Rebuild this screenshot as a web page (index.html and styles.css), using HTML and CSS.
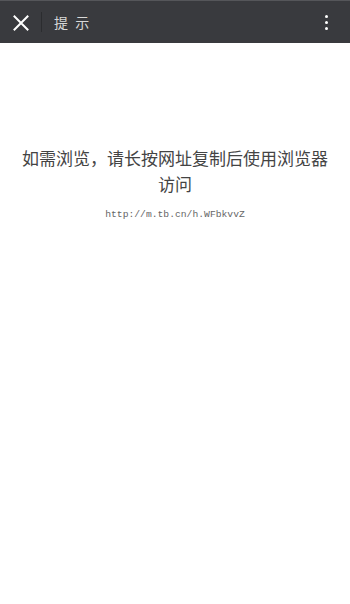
FILE: index.html
```html
<!DOCTYPE html>
<html lang="zh">
<head>
<meta charset="utf-8">
<title>提示</title>
<link rel="stylesheet" href="styles.css">
</head>
<body>
<header class="bar">
  <div class="close">
    <svg width="16" height="16" viewBox="0 0 16 16"><path d="M1.5 1.5 L14.5 14.5 M14.5 1.5 L1.5 14.5" stroke="#fff" stroke-width="2" stroke-linecap="square"/></svg>
  </div>
  <div class="divider"></div>
  <div class="title">提 示</div>
  <div class="menu"><span></span><span></span><span></span></div>
</header>
<main class="content">
  <p class="msg">如需浏览，请长按网址复制后使用浏览器<br>访问</p>
  <p class="url">http://m.tb.cn/h.WFbkvvZ</p>
</main>
</body>
</html>
```
FILE: styles.css
```css
html, body { margin: 0; padding: 0; background: #fff; }
body { width: 350px; height: 604px; font-family: "Noto Sans CJK SC", "Noto Sans", sans-serif; }
.bar {
  height: 43px;
  background: #393a3e;
  border-top: 1px solid #55565a;
  box-sizing: border-box;
  display: flex;
  align-items: center;
}
.close { width: 41px; display: flex; justify-content: center; align-items: center; padding-top: 1px; }
.divider { width: 1px; height: 20px; background: #2b2c2f; }
.title { margin-left: 12px; color: #d8d8d8; font-size: 14px; letter-spacing: 2px; flex: 1; }
.menu { width: 48px; display: flex; flex-direction: column; align-items: center; gap: 3px; padding-left: 4px; }
.menu span { width: 3px; height: 3px; background: #fff; border-radius: 50%; display: block; }
.content { padding: 102px 8px 0; text-align: center; }
.msg { margin: 0; font-size: 17px; line-height: 26px; color: #444; white-space: nowrap; }
.url { margin: 12px 0 0; font-family: "Liberation Mono", monospace; font-size: 9.7px; color: #666; }
```
